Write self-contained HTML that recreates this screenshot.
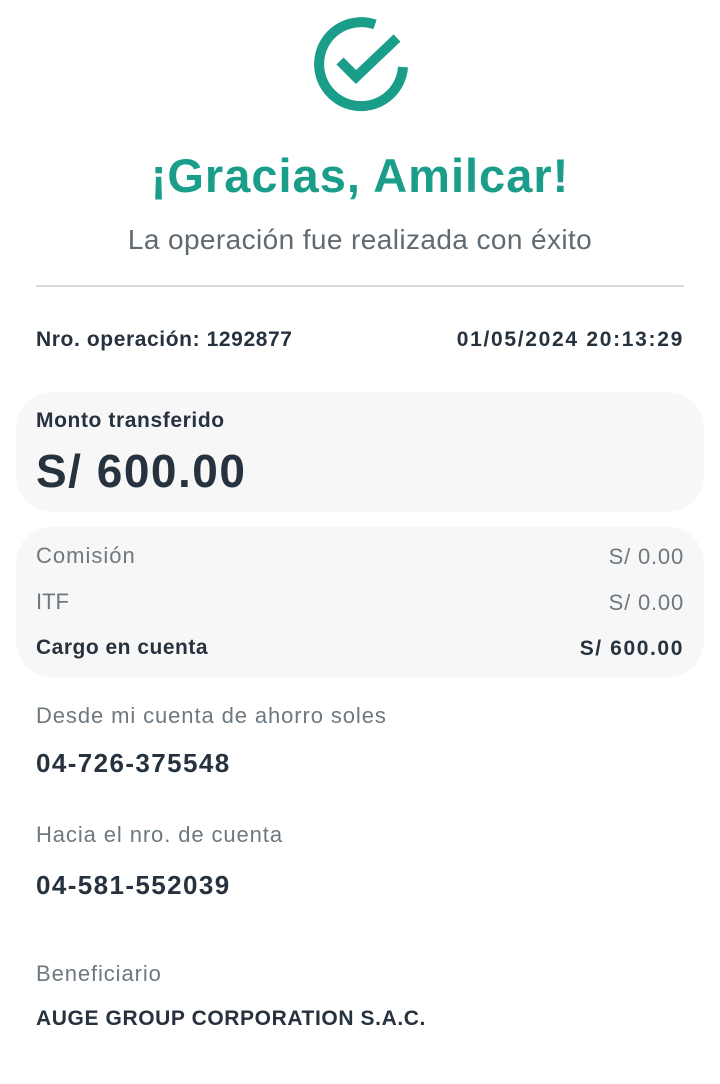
<!DOCTYPE html>
<html><head><meta charset="utf-8"><style>
body{margin:0;width:720px;height:1084px;background:#fff;font-family:"Liberation Sans",sans-serif;color:#27323f;position:relative;overflow:hidden}
.a{position:absolute;white-space:nowrap}
.g{color:#6d7880}
.card{position:absolute;left:16px;width:688px;background:#f7f7f8;border-radius:36px}
</style></head><body>
<svg class="a" style="left:300px;top:8px" width="120" height="118" viewBox="300 8 120 118">
<path d="M375 24.5 A42 42 0 1 0 403 67" fill="none" stroke="#1a9e8a" stroke-width="10"/>
<path d="M340 61 L356 77 L397 38" fill="none" stroke="#1a9e8a" stroke-width="10"/>
</svg>
<div class="a" style="left:0;width:720px;text-align:center;top:148px;font-size:47px;color:#1a9e8a;font-weight:bold;letter-spacing:1px">¡Gracias, Amilcar!</div>
<div class="a g" style="left:0;width:720px;text-align:center;top:224px;font-size:28px;color:#5f6a72;letter-spacing:0.4px">La operación fue realizada con éxito</div>
<div class="a" style="left:36px;top:285px;width:648px;height:2px;background:#d8dadc"></div>
<div class="a" style="left:36px;top:328px;font-size:21px;font-weight:bold;letter-spacing:0.6px">Nro. operación: 1292877</div>
<div class="a" style="right:36px;top:328px;font-size:21px;font-weight:bold;letter-spacing:1.7px">01/05/2024 20:13:29</div>
<div class="card" style="top:392px;height:120px"></div>
<div class="a" style="left:36px;top:409px;font-size:21px;font-weight:bold;letter-spacing:0.6px">Monto transferido</div>
<div class="a" style="left:36px;top:444px;font-size:46px;font-weight:bold;letter-spacing:1.5px">S/ 600.00</div>
<div class="card" style="top:527px;height:150px"></div>
<div class="a g" style="left:36px;top:543px;font-size:22px;letter-spacing:1px">Comisión</div>
<div class="a g" style="right:36px;top:544px;font-size:22px;letter-spacing:0.8px">S/ 0.00</div>
<div class="a g" style="left:36px;top:589px;font-size:22px">ITF</div>
<div class="a g" style="right:36px;top:590px;font-size:22px;letter-spacing:0.8px">S/ 0.00</div>
<div class="a" style="left:36px;top:636px;font-size:21px;font-weight:bold;letter-spacing:0.5px">Cargo en cuenta</div>
<div class="a" style="right:36px;top:637px;font-size:21px;font-weight:bold;letter-spacing:1.6px">S/ 600.00</div>
<div class="a g" style="left:36px;top:703px;font-size:22px;letter-spacing:0.9px">Desde mi cuenta de ahorro soles</div>
<div class="a" style="left:36px;top:748px;font-size:26px;font-weight:bold;letter-spacing:1.4px">04-726-375548</div>
<div class="a g" style="left:36px;top:822px;font-size:22px;letter-spacing:0.9px">Hacia el nro. de cuenta</div>
<div class="a" style="left:36px;top:870px;font-size:26px;font-weight:bold;letter-spacing:1.4px">04-581-552039</div>
<div class="a g" style="left:36px;top:961px;font-size:22px;letter-spacing:0.9px">Beneficiario</div>
<div class="a" style="left:36px;top:1007px;font-size:21px;font-weight:bold;letter-spacing:0.6px">AUGE GROUP CORPORATION S.A.C.</div>
</body></html>
